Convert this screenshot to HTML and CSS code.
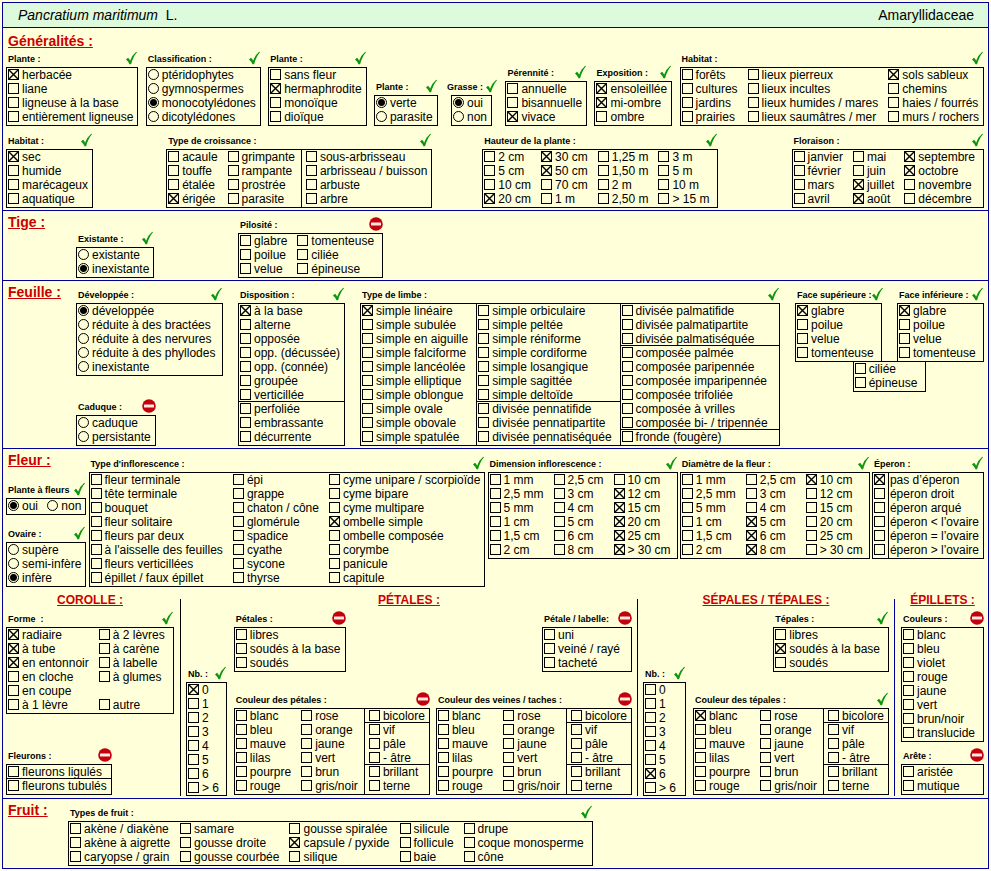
FILE: index.html
```html
<!DOCTYPE html>
<html lang="fr">
  <head>
    <meta charset="UTF-8" />
    <meta name="viewport" content="width=device-width, initial-scale=1.0" />
    <link rel="stylesheet" href="styles.css">
    <title>Pancratium maritimum L.</title>
  </head>
  <body>
    <!-- icons shared by all the groups -->
    <svg class="defs" aria-hidden="true">
      <symbol id="ok" viewBox="0 0 12 14">
        <path d="M0 8.400L2 6.800Q3.400 8 4.100 9.800Q6.200 4 10.200 0.800L11 1.300Q7.200 5.600 5.100 13.200L3.500 13.200Q2.200 10.200 0 8.400Z" fill="#0c960c" />
      </symbol>
      <symbol id="no" viewBox="0 0 14 14">
        <circle cx="7" cy="7" r="6.800" fill="#c4000e" />
        <rect x="2" y="5.400" width="10" height="3.200" rx="0.500" fill="#fbe9e0" />
      </symbol>
    </svg>

    <form class="sheet">
      <header class="top">
        <h1><i>Pancratium maritimum</i>&nbsp; L.</h1>
        <span>Amaryllidaceae</span>
      </header>

      <section class="general">
        <h2>Généralités :</h2>
        <div class="row">
          <fieldset>
            <legend>Plante : <svg class="ok"><use href="#ok" /></svg></legend>
            <div class="box">
              <div class="col">
                <label><input type="checkbox" checked>herbacée</label>
                <label><input type="checkbox">liane</label>
                <label><input type="checkbox">ligneuse à la base</label>
                <label><input type="checkbox">entièrement ligneuse</label>
              </div>
            </div>
          </fieldset>
          <fieldset>
            <legend>Classification : <svg class="ok"><use href="#ok" /></svg></legend>
            <div class="box">
              <div class="col">
                <label><input type="radio" name="classe">ptéridophytes</label>
                <label><input type="radio" name="classe">gymnospermes</label>
                <label><input type="radio" name="classe" checked>monocotylédones</label>
                <label><input type="radio" name="classe">dicotylédones</label>
              </div>
            </div>
          </fieldset>
          <fieldset>
            <legend>Plante : <svg class="ok"><use href="#ok" /></svg></legend>
            <div class="box">
              <div class="col">
                <label><input type="checkbox">sans fleur</label>
                <label><input type="checkbox" checked>hermaphrodite</label>
                <label><input type="checkbox">monoïque</label>
                <label><input type="checkbox">dioïque</label>
              </div>
            </div>
          </fieldset>
          <fieldset>
            <legend>Plante : <svg class="ok"><use href="#ok" /></svg></legend>
            <div class="box">
              <div class="col">
                <label><input type="radio" name="verte" checked>verte</label>
                <label><input type="radio" name="verte">parasite</label>
              </div>
            </div>
          </fieldset>
          <fieldset class="narrow">
            <legend>Grasse : <svg class="ok"><use href="#ok" /></svg></legend>
            <div class="box">
              <div class="col">
                <label><input type="radio" name="grasse" checked>oui</label>
                <label><input type="radio" name="grasse">non</label>
              </div>
            </div>
          </fieldset>
          <fieldset>
            <legend>Pérennité : <svg class="ok"><use href="#ok" /></svg></legend>
            <div class="box">
              <div class="col">
                <label><input type="checkbox">annuelle</label>
                <label><input type="checkbox">bisannuelle</label>
                <label><input type="checkbox" checked>vivace</label>
              </div>
            </div>
          </fieldset>
          <fieldset>
            <legend>Exposition : <svg class="ok"><use href="#ok" /></svg></legend>
            <div class="box">
              <div class="col">
                <label><input type="checkbox" checked>ensoleillée</label>
                <label><input type="checkbox" checked>mi-ombre</label>
                <label><input type="checkbox">ombre</label>
              </div>
            </div>
          </fieldset>
          <fieldset>
            <legend>Habitat : <svg class="ok"><use href="#ok" /></svg></legend>
            <div class="box">
              <div class="col">
                <label><input type="checkbox">forêts</label>
                <label><input type="checkbox">cultures</label>
                <label><input type="checkbox">jardins</label>
                <label><input type="checkbox">prairies</label>
              </div>
              <div class="col">
                <label><input type="checkbox">lieux pierreux</label>
                <label><input type="checkbox">lieux incultes</label>
                <label><input type="checkbox">lieux humides / mares</label>
                <label><input type="checkbox">lieux saumâtres / mer</label>
              </div>
              <div class="col">
                <label><input type="checkbox" checked>sols sableux</label>
                <label><input type="checkbox">chemins</label>
                <label><input type="checkbox">haies / fourrés</label>
                <label><input type="checkbox">murs / rochers</label>
              </div>
            </div>
          </fieldset>
        </div>

        <div class="row">
          <fieldset>
            <legend>Habitat : <svg class="ok"><use href="#ok" /></svg></legend>
            <div class="box">
              <div class="col">
                <label><input type="checkbox" checked>sec</label>
                <label><input type="checkbox">humide</label>
                <label><input type="checkbox">marécageux</label>
                <label><input type="checkbox">aquatique</label>
              </div>
            </div>
          </fieldset>
          <div class="middle">
            <fieldset>
              <legend>Type de croissance : <svg class="ok"><use href="#ok" /></svg></legend>
              <div class="box">
                <div class="col">
                  <label><input type="checkbox">acaule</label>
                  <label><input type="checkbox">touffe</label>
                  <label><input type="checkbox">étalée</label>
                  <label><input type="checkbox" checked>érigée</label>
                </div>
                <div class="col">
                  <label><input type="checkbox">grimpante</label>
                  <label><input type="checkbox">rampante</label>
                  <label><input type="checkbox">prostrée</label>
                  <label><input type="checkbox">parasite</label>
                </div>
                <div class="col ruled">
                  <label><input type="checkbox">sous-arbrisseau</label>
                  <label><input type="checkbox">arbrisseau / buisson</label>
                  <label><input type="checkbox">arbuste</label>
                  <label><input type="checkbox">arbre</label>
                </div>
              </div>
            </fieldset>
            <fieldset>
              <legend>Hauteur de la plante : <svg class="ok"><use href="#ok" /></svg></legend>
              <div class="box roomy">
                <div class="col">
                  <label><input type="checkbox">2 cm</label>
                  <label><input type="checkbox">5 cm</label>
                  <label><input type="checkbox">10 cm</label>
                  <label><input type="checkbox" checked>20 cm</label>
                </div>
                <div class="col">
                  <label><input type="checkbox" checked>30 cm</label>
                  <label><input type="checkbox" checked>50 cm</label>
                  <label><input type="checkbox">70 cm</label>
                  <label><input type="checkbox">1 m</label>
                </div>
                <div class="col">
                  <label><input type="checkbox">1,25 m</label>
                  <label><input type="checkbox">1,50 m</label>
                  <label><input type="checkbox">2 m</label>
                  <label><input type="checkbox">2,50 m</label>
                </div>
                <div class="col">
                  <label><input type="checkbox">3 m</label>
                  <label><input type="checkbox">5 m</label>
                  <label><input type="checkbox">10 m</label>
                  <label><input type="checkbox">&gt; 15 m</label>
                </div>
              </div>
            </fieldset>
          </div>
          <fieldset>
            <legend>Floraison : <svg class="ok"><use href="#ok" /></svg></legend>
            <div class="box roomy">
              <div class="col">
                <label><input type="checkbox">janvier</label>
                <label><input type="checkbox">février</label>
                <label><input type="checkbox">mars</label>
                <label><input type="checkbox">avril</label>
              </div>
              <div class="col">
                <label><input type="checkbox">mai</label>
                <label><input type="checkbox">juin</label>
                <label><input type="checkbox" checked>juillet</label>
                <label><input type="checkbox" checked>août</label>
              </div>
              <div class="col">
                <label><input type="checkbox" checked>septembre</label>
                <label><input type="checkbox" checked>octobre</label>
                <label><input type="checkbox">novembre</label>
                <label><input type="checkbox">décembre</label>
              </div>
            </div>
          </fieldset>
        </div>
      </section>

      <section class="part">
        <h2>Tige :</h2>
        <div class="fields bottom">
          <div class="side">
            <fieldset>
              <legend>Existante : <svg class="ok"><use href="#ok" /></svg></legend>
              <div class="box">
                <div class="col">
                  <label><input type="radio" name="tige">existante</label>
                  <label><input type="radio" name="tige" checked>inexistante</label>
                </div>
              </div>
            </fieldset>
          </div>
          <fieldset>
            <legend>Pilosité : <svg class="no"><use href="#no" /></svg></legend>
            <div class="box roomy">
              <div class="col">
                <label><input type="checkbox">glabre</label>
                <label><input type="checkbox">poilue</label>
                <label><input type="checkbox">velue</label>
              </div>
              <div class="col">
                <label><input type="checkbox">tomenteuse</label>
                <label><input type="checkbox">ciliée</label>
                <label><input type="checkbox">épineuse</label>
              </div>
            </div>
          </fieldset>
        </div>
      </section>

      <section class="part">
        <h2>Feuille :</h2>
        <div class="fields">
          <div class="side">
            <fieldset class="full">
              <legend>Développée : <svg class="ok"><use href="#ok" /></svg></legend>
              <div class="box">
                <div class="col">
                  <label><input type="radio" name="feuille" checked>développée</label>
                  <label><input type="radio" name="feuille">réduite à des bractées</label>
                  <label><input type="radio" name="feuille">réduite à des nervures</label>
                  <label><input type="radio" name="feuille">réduite à des phyllodes</label>
                  <label><input type="radio" name="feuille">inexistante</label>
                </div>
              </div>
            </fieldset>
            <fieldset>
              <legend>Caduque : <svg class="no"><use href="#no" /></svg></legend>
              <div class="box">
                <div class="col">
                  <label><input type="radio" name="caduque">caduque</label>
                  <label><input type="radio" name="caduque">persistante</label>
                </div>
              </div>
            </fieldset>
          </div>
          <fieldset>
            <legend>Disposition : <svg class="ok"><use href="#ok" /></svg></legend>
            <div class="box">
              <div class="col">
                <label><input type="checkbox" checked>à la base</label>
                <label><input type="checkbox">alterne</label>
                <label><input type="checkbox">opposée</label>
                <label><input type="checkbox">opp. (décussée)</label>
                <label><input type="checkbox">opp. (connée)</label>
                <label><input type="checkbox">groupée</label>
                <label class="line"><input type="checkbox">verticillée</label>
                <label><input type="checkbox">perfoliée</label>
                <label><input type="checkbox">embrassante</label>
                <label><input type="checkbox">décurrente</label>
              </div>
            </div>
          </fieldset>
          <fieldset>
            <legend>Type de limbe : <svg class="ok"><use href="#ok" /></svg></legend>
            <div class="box limbe">
              <div class="col">
                <label><input type="checkbox" checked>simple linéaire</label>
                <label><input type="checkbox">simple subulée</label>
                <label><input type="checkbox">simple en aiguille</label>
                <label><input type="checkbox">simple falciforme</label>
                <label><input type="checkbox">simple lancéolée</label>
                <label><input type="checkbox">simple elliptique</label>
                <label><input type="checkbox">simple oblongue</label>
                <label><input type="checkbox">simple ovale</label>
                <label><input type="checkbox">simple obovale</label>
                <label><input type="checkbox">simple spatulée</label>
              </div>
              <div class="col ruled">
                <label><input type="checkbox">simple orbiculaire</label>
                <label><input type="checkbox">simple peltée</label>
                <label><input type="checkbox">simple réniforme</label>
                <label><input type="checkbox">simple cordiforme</label>
                <label><input type="checkbox">simple losangique</label>
                <label><input type="checkbox">simple sagittée</label>
                <label class="line"><input type="checkbox">simple deltoïde</label>
                <label><input type="checkbox">divisée pennatifide</label>
                <label><input type="checkbox">divisée pennatipartite</label>
                <label><input type="checkbox">divisée pennatiséquée</label>
              </div>
              <div class="col ruled">
                <label><input type="checkbox">divisée palmatifide</label>
                <label><input type="checkbox">divisée palmatipartite</label>
                <label class="line"><input type="checkbox">divisée palmatiséquée</label>
                <label><input type="checkbox">composée palmée</label>
                <label><input type="checkbox">composée paripennée</label>
                <label><input type="checkbox">composée imparipennée</label>
                <label><input type="checkbox">composée trifoliée</label>
                <label><input type="checkbox">composée à vrilles</label>
                <label class="line"><input type="checkbox">composée bi- / tripennée</label>
                <label><input type="checkbox">fronde (fougère)</label>
              </div>
            </div>
          </fieldset>
          <div class="faces">
            <div class="pair">
              <fieldset>
                <legend>Face supérieure : <svg class="ok"><use href="#ok" /></svg></legend>
                <div class="box">
                  <div class="col">
                    <label><input type="checkbox" checked>glabre</label>
                    <label><input type="checkbox">poilue</label>
                    <label><input type="checkbox">velue</label>
                    <label><input type="checkbox">tomenteuse</label>
                  </div>
                </div>
              </fieldset>
              <fieldset>
                <legend>Face inférieure : <svg class="ok"><use href="#ok" /></svg></legend>
                <div class="box">
                  <div class="col">
                    <label><input type="checkbox" checked>glabre</label>
                    <label><input type="checkbox">poilue</label>
                    <label><input type="checkbox">velue</label>
                    <label><input type="checkbox">tomenteuse</label>
                  </div>
                </div>
              </fieldset>
            </div>
            <div class="box roomy shared">
              <div class="col">
                <label><input type="checkbox">ciliée</label>
                <label><input type="checkbox">épineuse</label>
              </div>
            </div>
          </div>
        </div>
      </section>

      <section class="flower">
        <div class="flower-top">
          <div class="flower-side">
            <h2>Fleur :</h2>
            <fieldset>
              <legend>Plante à fleurs <svg class="ok"><use href="#ok" /></svg></legend>
              <div class="box">
                <div class="col inline">
                  <label><input type="radio" name="fleurs" checked>oui</label>
                  <label><input type="radio" name="fleurs">non</label>
                </div>
              </div>
            </fieldset>
            <fieldset>
              <legend>Ovaire : <svg class="ok"><use href="#ok" /></svg></legend>
              <div class="box">
                <div class="col">
                  <label><input type="radio" name="ovaire">supère</label>
                  <label><input type="radio" name="ovaire">semi-infère</label>
                  <label><input type="radio" name="ovaire" checked>infère</label>
                </div>
              </div>
            </fieldset>
          </div>
          <fieldset>
            <legend>Type d'inflorescence : <svg class="ok"><use href="#ok" /></svg></legend>
            <div class="box">
              <div class="col">
                <label><input type="checkbox">fleur terminale</label>
                <label><input type="checkbox">tête terminale</label>
                <label><input type="checkbox">bouquet</label>
                <label><input type="checkbox">fleur solitaire</label>
                <label><input type="checkbox">fleurs par deux</label>
                <label><input type="checkbox">à l'aisselle des feuilles</label>
                <label><input type="checkbox">fleurs verticillées</label>
                <label><input type="checkbox">épillet / faux épillet</label>
              </div>
              <div class="col">
                <label><input type="checkbox">épi</label>
                <label><input type="checkbox">grappe</label>
                <label><input type="checkbox">chaton / cône</label>
                <label><input type="checkbox">glomérule</label>
                <label><input type="checkbox">spadice</label>
                <label><input type="checkbox">cyathe</label>
                <label><input type="checkbox">sycone</label>
                <label><input type="checkbox">thyrse</label>
              </div>
              <div class="col">
                <label><input type="checkbox">cyme unipare / scorpioïde</label>
                <label><input type="checkbox">cyme bipare</label>
                <label><input type="checkbox">cyme multipare</label>
                <label><input type="checkbox" checked>ombelle simple</label>
                <label><input type="checkbox">ombelle composée</label>
                <label><input type="checkbox">corymbe</label>
                <label><input type="checkbox">panicule</label>
                <label><input type="checkbox">capitule</label>
              </div>
            </div>
          </fieldset>
          <fieldset>
            <legend>Dimension inflorescence : <svg class="ok"><use href="#ok" /></svg></legend>
            <div class="box sizes">
              <div class="col">
                <label><input type="checkbox">1 mm</label>
                <label><input type="checkbox">2,5 mm</label>
                <label><input type="checkbox">5 mm</label>
                <label><input type="checkbox">1 cm</label>
                <label><input type="checkbox">1,5 cm</label>
                <label><input type="checkbox">2 cm</label>
              </div>
              <div class="col">
                <label><input type="checkbox">2,5 cm</label>
                <label><input type="checkbox">3 cm</label>
                <label><input type="checkbox">4 cm</label>
                <label><input type="checkbox">5 cm</label>
                <label><input type="checkbox">6 cm</label>
                <label><input type="checkbox">8 cm</label>
              </div>
              <div class="col">
                <label><input type="checkbox">10 cm</label>
                <label><input type="checkbox" checked>12 cm</label>
                <label><input type="checkbox" checked>15 cm</label>
                <label><input type="checkbox" checked>20 cm</label>
                <label><input type="checkbox" checked>25 cm</label>
                <label><input type="checkbox" checked>&gt; 30 cm</label>
              </div>
            </div>
          </fieldset>
          <fieldset>
            <legend>Diamètre de la fleur : <svg class="ok"><use href="#ok" /></svg></legend>
            <div class="box sizes">
              <div class="col">
                <label><input type="checkbox">1 mm</label>
                <label><input type="checkbox">2,5 mm</label>
                <label><input type="checkbox">5 mm</label>
                <label><input type="checkbox">1 cm</label>
                <label><input type="checkbox">1,5 cm</label>
                <label><input type="checkbox">2 cm</label>
              </div>
              <div class="col">
                <label><input type="checkbox">2,5 cm</label>
                <label><input type="checkbox">3 cm</label>
                <label><input type="checkbox">4 cm</label>
                <label><input type="checkbox" checked>5 cm</label>
                <label><input type="checkbox" checked>6 cm</label>
                <label><input type="checkbox" checked>8 cm</label>
              </div>
              <div class="col">
                <label><input type="checkbox" checked>10 cm</label>
                <label><input type="checkbox">12 cm</label>
                <label><input type="checkbox">15 cm</label>
                <label><input type="checkbox">20 cm</label>
                <label><input type="checkbox">25 cm</label>
                <label><input type="checkbox">&gt; 30 cm</label>
              </div>
            </div>
          </fieldset>
          <fieldset>
            <legend>Éperon : <svg class="ok"><use href="#ok" /></svg></legend>
            <div class="box spur">
              <div class="col">
                <label><input type="checkbox" checked>pas d’éperon</label>
                <label><input type="checkbox">éperon droit</label>
                <label><input type="checkbox">éperon arqué</label>
                <label><input type="checkbox">éperon &lt; l’ovaire</label>
                <label><input type="checkbox">éperon = l’ovaire</label>
                <label><input type="checkbox">éperon &gt; l’ovaire</label>
              </div>
            </div>
          </fieldset>
        </div>

        <div class="organs">
          <div class="organ">
            <h3>COROLLE :</h3>
            <div class="stack">
              <fieldset class="full">
                <legend>Forme &nbsp;: <svg class="ok"><use href="#ok" /></svg></legend>
                <div class="box">
                  <div class="col">
                    <label><input type="checkbox" checked>radiaire</label>
                    <label><input type="checkbox" checked>à tube</label>
                    <label><input type="checkbox" checked>en entonnoir</label>
                    <label><input type="checkbox">en cloche</label>
                    <label><input type="checkbox">en coupe</label>
                    <label><input type="checkbox">à 1 lèvre</label>
                  </div>
                  <div class="col">
                    <label><input type="checkbox">à 2 lèvres</label>
                    <label><input type="checkbox">à carène</label>
                    <label><input type="checkbox">à labelle</label>
                    <label><input type="checkbox">à glumes</label>
                    <label class="last"><input type="checkbox">autre</label>
                  </div>
                </div>
              </fieldset>
              <fieldset>
                <legend>Fleurons : <svg class="no"><use href="#no" /></svg></legend>
                <div class="box">
                  <div class="col">
                    <label class="line"><input type="checkbox">fleurons ligulés</label>
                    <label><input type="checkbox">fleurons tubulés</label>
                  </div>
                </div>
              </fieldset>
            </div>
          </div>

          <div class="organ">
            <h3>PÉTALES :</h3>
            <div class="organ-body">
              <fieldset class="count">
                <legend>Nb. : <svg class="ok"><use href="#ok" /></svg></legend>
                <div class="box">
                  <div class="col">
                    <label><input type="checkbox" checked>0</label>
                    <label><input type="checkbox">1</label>
                    <label><input type="checkbox">2</label>
                    <label><input type="checkbox">3</label>
                    <label><input type="checkbox">4</label>
                    <label><input type="checkbox">5</label>
                    <label><input type="checkbox">6</label>
                    <label><input type="checkbox">&gt; 6</label>
                  </div>
                </div>
              </fieldset>
              <div class="stack">
                <div class="between">
                  <fieldset>
                    <legend>Pétales : <svg class="no"><use href="#no" /></svg></legend>
                    <div class="box">
                      <div class="col">
                        <label><input type="checkbox">libres</label>
                        <label><input type="checkbox">soudés à la base</label>
                        <label><input type="checkbox">soudés</label>
                      </div>
                    </div>
                  </fieldset>
                  <fieldset>
                    <legend>Pétale / labelle: <svg class="no"><use href="#no" /></svg></legend>
                    <div class="box wide">
                      <div class="col">
                        <label><input type="checkbox">uni</label>
                        <label><input type="checkbox">veiné / rayé</label>
                        <label><input type="checkbox">tacheté</label>
                      </div>
                    </div>
                  </fieldset>
                </div>
                <div class="between">
                  <fieldset>
                    <legend>Couleur des pétales : <svg class="no"><use href="#no" /></svg></legend>
                    <div class="box">
                      <div class="col">
                        <label><input type="checkbox">blanc</label>
                        <label><input type="checkbox">bleu</label>
                        <label><input type="checkbox">mauve</label>
                        <label><input type="checkbox">lilas</label>
                        <label><input type="checkbox">pourpre</label>
                        <label><input type="checkbox">rouge</label>
                      </div>
                      <div class="col">
                        <label><input type="checkbox">rose</label>
                        <label><input type="checkbox">orange</label>
                        <label><input type="checkbox">jaune</label>
                        <label><input type="checkbox">vert</label>
                        <label><input type="checkbox">brun</label>
                        <label><input type="checkbox">gris/noir</label>
                      </div>
                      <div class="col ruled">
                        <label class="line"><input type="checkbox">bicolore</label>
                        <label><input type="checkbox">vif</label>
                        <label><input type="checkbox">pâle</label>
                        <label class="line"><input type="checkbox">- âtre</label>
                        <label><input type="checkbox">brillant</label>
                        <label><input type="checkbox">terne</label>
                      </div>
                    </div>
                  </fieldset>
                  <fieldset>
                    <legend>Couleur des veines / taches : <svg class="no"><use href="#no" /></svg></legend>
                    <div class="box">
                      <div class="col">
                        <label><input type="checkbox">blanc</label>
                        <label><input type="checkbox">bleu</label>
                        <label><input type="checkbox">mauve</label>
                        <label><input type="checkbox">lilas</label>
                        <label><input type="checkbox">pourpre</label>
                        <label><input type="checkbox">rouge</label>
                      </div>
                      <div class="col">
                        <label><input type="checkbox">rose</label>
                        <label><input type="checkbox">orange</label>
                        <label><input type="checkbox">jaune</label>
                        <label><input type="checkbox">vert</label>
                        <label><input type="checkbox">brun</label>
                        <label><input type="checkbox">gris/noir</label>
                      </div>
                      <div class="col ruled">
                        <label class="line"><input type="checkbox">bicolore</label>
                        <label><input type="checkbox">vif</label>
                        <label><input type="checkbox">pâle</label>
                        <label class="line"><input type="checkbox">- âtre</label>
                        <label><input type="checkbox">brillant</label>
                        <label><input type="checkbox">terne</label>
                      </div>
                    </div>
                  </fieldset>
                </div>
              </div>
            </div>
          </div>

          <div class="organ">
            <h3>SÉPALES / TÉPALES :</h3>
            <div class="organ-body">
              <fieldset class="count">
                <legend>Nb. : <svg class="ok"><use href="#ok" /></svg></legend>
                <div class="box">
                  <div class="col">
                    <label><input type="checkbox">0</label>
                    <label><input type="checkbox">1</label>
                    <label><input type="checkbox">2</label>
                    <label><input type="checkbox">3</label>
                    <label><input type="checkbox">4</label>
                    <label><input type="checkbox">5</label>
                    <label><input type="checkbox" checked>6</label>
                    <label><input type="checkbox">&gt; 6</label>
                  </div>
                </div>
              </fieldset>
              <div class="stack right">
                <fieldset>
                  <legend>Tépales : <svg class="ok"><use href="#ok" /></svg></legend>
                  <div class="box roomy">
                    <div class="col">
                      <label><input type="checkbox">libres</label>
                      <label><input type="checkbox" checked>soudés à la base</label>
                      <label><input type="checkbox">soudés</label>
                    </div>
                  </div>
                </fieldset>
                <fieldset>
                  <legend>Couleur des tépales : <svg class="ok"><use href="#ok" /></svg></legend>
                  <div class="box">
                    <div class="col">
                      <label><input type="checkbox" checked>blanc</label>
                      <label><input type="checkbox">bleu</label>
                      <label><input type="checkbox">mauve</label>
                      <label><input type="checkbox">lilas</label>
                      <label><input type="checkbox">pourpre</label>
                      <label><input type="checkbox">rouge</label>
                    </div>
                    <div class="col">
                      <label><input type="checkbox">rose</label>
                      <label><input type="checkbox">orange</label>
                      <label><input type="checkbox">jaune</label>
                      <label><input type="checkbox">vert</label>
                      <label><input type="checkbox">brun</label>
                      <label><input type="checkbox">gris/noir</label>
                    </div>
                    <div class="col ruled">
                      <label class="line"><input type="checkbox">bicolore</label>
                      <label><input type="checkbox">vif</label>
                      <label><input type="checkbox">pâle</label>
                      <label class="line"><input type="checkbox">- âtre</label>
                      <label><input type="checkbox">brillant</label>
                      <label><input type="checkbox">terne</label>
                    </div>
                  </div>
                </fieldset>
              </div>
            </div>
          </div>

          <div class="organ">
            <h3>ÉPILLETS :</h3>
            <div class="stack">
              <fieldset class="full">
                <legend>Couleurs : <svg class="no"><use href="#no" /></svg></legend>
                <div class="box">
                  <div class="col">
                    <label><input type="checkbox">blanc</label>
                    <label><input type="checkbox">bleu</label>
                    <label><input type="checkbox">violet</label>
                    <label><input type="checkbox">rouge</label>
                    <label><input type="checkbox">jaune</label>
                    <label><input type="checkbox">vert</label>
                    <label><input type="checkbox">brun/noir</label>
                    <label><input type="checkbox">translucide</label>
                  </div>
                </div>
              </fieldset>
              <fieldset class="full">
                <legend>Arête : <svg class="no"><use href="#no" /></svg></legend>
                <div class="box">
                  <div class="col">
                    <label><input type="checkbox">aristée</label>
                    <label><input type="checkbox">mutique</label>
                  </div>
                </div>
              </fieldset>
            </div>
          </div>
        </div>
      </section>

      <section class="part fruit">
        <h2>Fruit :</h2>
        <div class="fields">
          <fieldset>
            <legend>Types de fruit : <svg class="ok"><use href="#ok" /></svg></legend>
            <div class="box roomy">
              <div class="col">
                <label><input type="checkbox">akène / diakène</label>
                <label><input type="checkbox">akène à aigrette</label>
                <label><input type="checkbox">caryopse / grain</label>
              </div>
              <div class="col">
                <label><input type="checkbox">samare</label>
                <label><input type="checkbox">gousse droite</label>
                <label><input type="checkbox">gousse courbée</label>
              </div>
              <div class="col">
                <label><input type="checkbox">gousse spiralée</label>
                <label><input type="checkbox" checked>capsule / pyxide</label>
                <label><input type="checkbox">silique</label>
              </div>
              <div class="col">
                <label><input type="checkbox">silicule</label>
                <label><input type="checkbox">follicule</label>
                <label><input type="checkbox">baie</label>
              </div>
              <div class="col">
                <label><input type="checkbox">drupe</label>
                <label><input type="checkbox">coque monosperme</label>
                <label><input type="checkbox">cône</label>
              </div>
            </div>
          </fieldset>
        </div>
      </section>
    </form>
  </body>
</html>
```
FILE: styles.css
```css
* {
    box-sizing: border-box;
}

body {
    margin: 0;
    padding: 2px;
    background: #ffffd9;
    color: #000;
    font-family: "Liberation Sans", Helvetica, Arial, sans-serif;
    font-size: 12px;
    line-height: 14px;
}

.defs {
    display: none;
}

.sheet {
    min-width: 987px;
    border: 1px solid #000099;
}

/* title bar */
.top {
    display: flex;
    justify-content: space-between;
    padding: 0 14px 0 15px;
    background: #ddfadd;
    font-size: 14px;
    line-height: 24px;
}

.top h1 {
    margin: 0;
    font-size: 14px;
    font-weight: normal;
}

section {
    border-top: 1px solid #000099;
    padding: 0 4px 2px 3px;
}

h2 {
    margin: 0;
    padding: 2px 0 0 2px;
    color: #cc0000;
    font-size: 14px;
    line-height: 19px;
    text-decoration: underline;
}

h3 {
    margin: -6px 0 4px;
    color: #cc0000;
    font-size: 12px;
    line-height: 14px;
    text-align: center;
    text-decoration: underline;
}

/* one group = small heading + state icon + framed list */
fieldset {
    min-width: 0;
    margin: 0;
    padding: 0;
    border: none;
}

legend {
    display: flex;
    justify-content: space-between;
    width: 100%;
    height: 16px;
    padding: 0 0 0 2px;
    font-size: 9px;
    font-weight: bold;
    line-height: 16px;
    white-space: nowrap;
}

.ok,
.no {
    flex: none;
    width: 12px;
    height: 14px;
}

.no {
    width: 14px;
}

.box {
    display: flex;
    border: 1px solid #000;
}

.col {
    padding-bottom: 1px;
}

.col + .col {
    margin-left: 5px;
}

.col:last-child {
    flex: 1;
}

.col label {
    display: flex;
    gap: 3px;
    height: 14px;
    padding: 0 4px 0 1px;
    white-space: nowrap;
}

.col .line {
    border-bottom: 1px solid #000;
}

.col .last {
    margin-top: 14px;
}

.col.ruled {
    margin-left: 2px;
    border-left: 1px solid #000;
}

.ruled label {
    padding-left: 4px;
}

.sizes .col:last-child label {
    padding-right: 6px;
}

.roomy .col:last-child label,
.limbe .col label {
    padding-right: 8px;
}

.wide .col label,
.limbe .col:last-child label {
    padding-right: 11px;
}

.limbe .ruled {
    margin-left: 0;
}

.limbe .ruled label {
    padding-left: 1px;
}

/* heading wider than its list */
.narrow legend {
    gap: 3px;
}

.narrow .box {
    width: fit-content;
    margin: 0 auto;
}

.inline {
    display: flex;
    justify-content: space-between;
}

/* line between the ticks and their texts */
.spur .col {
    background: linear-gradient(#000, #000) 15px 0 / 1px 100% no-repeat;
}

.spur label {
    gap: 5px;
}

input {
    flex: none;
    appearance: none;
    width: 11px;
    height: 11px;
    margin: 1px 0 0;
    border: 1px solid #000;
}

input[type="checkbox"]:checked {
    background: url("data:image/svg+xml,%3Csvg xmlns='http://www.w3.org/2000/svg' viewBox='0 0 9 9'%3E%3Cpath d='M0 0L9 9M9 0L0 9' stroke='%23000' stroke-width='1.4'/%3E%3C/svg%3E") center / 9px 9px no-repeat;
}

input[type="radio"] {
    border-radius: 50%;
}

input[type="radio"]:checked {
    background: radial-gradient(circle, #000 3px, transparent 4px);
}

/* Généralités */
.general {
    padding-top: 2px;
}

.row {
    display: flex;
    align-items: flex-end;
    justify-content: space-between;
}

.row + .row {
    margin-top: 7px;
}

.middle {
    display: flex;
    gap: 50px;
}

/* Tige, Feuille, Fruit */
.part {
    display: flex;
}

.part h2 {
    flex: 0 0 70px;
}

.fruit h2 {
    flex-basis: 62px;
}

.fields {
    display: flex;
    flex: 1;
    align-items: flex-start;
    gap: 15px;
    padding-top: 6px;
}

.bottom {
    align-items: flex-end;
}

.side {
    display: flex;
    flex: 0 0 147px;
    flex-direction: column;
    align-items: flex-start;
    align-self: stretch;
    justify-content: space-between;
}

.bottom .side {
    justify-content: flex-end;
}

.full {
    width: 100%;
}

.faces {
    margin-left: auto;
}

.pair {
    display: flex;
    gap: 15px;
}

.pair fieldset {
    width: 87px;
}

.shared {
    width: fit-content;
    margin: -1px auto 0;
}

/* Fleur */
.flower-top {
    display: flex;
    justify-content: space-between;
}

.flower-top > fieldset {
    margin-top: 7px;
}

.flower-side {
    display: flex;
    flex: 0 0 80px;
    flex-direction: column;
    justify-content: space-between;
}

.organs {
    display: grid;
    grid-template-columns: 177fr 457fr 257fr 94fr;
    margin: 12px -4px 0 -3px;
}

.organ {
    display: flex;
    flex-direction: column;
    height: 197px;
    padding: 0 5px;
    border-left: 1px solid #000;
}

.organ:first-child {
    padding: 0 6px 0 3px;
    border-left: none;
}

.organ:last-child {
    padding: 0 4px 0 6px;
    border-color: #000099;
}

.organ-body {
    display: flex;
    flex: 1;
    align-items: flex-end;
    gap: 7px;
}

.count {
    flex: 1;
}

.count .col {
    padding: 0;
}

.stack {
    display: flex;
    flex: 1;
    flex-direction: column;
    align-items: flex-start;
    justify-content: space-between;
    padding-bottom: 1px;
}

.organ-body .stack {
    flex: none;
    align-items: stretch;
    align-self: stretch;
}

.organ-body .right {
    align-items: flex-end;
}

.between {
    display: flex;
    justify-content: space-between;
    gap: 6px;
}
```
